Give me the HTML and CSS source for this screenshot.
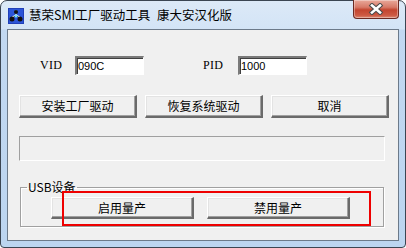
FILE: index.html
```html
<!DOCTYPE html>
<html lang="zh-CN">
<head>
    <meta charset="UTF-8">
    <meta name="viewport" content="width=device-width, initial-scale=1.0">
    <title>慧荣SMI工厂驱动工具 康大安汉化版</title>
    <link rel="stylesheet" href="styles.css">
</head>
<body>
    <div class="window">
        <div class="titlebar">
            <svg class="app-icon" width="16" height="16" viewBox="0 0 16 16">
                <rect x="0" y="0" width="16" height="16" fill="#1f3fb8"/>
                <rect x="1" y="1" width="14" height="14" fill="#2b55d8"/>
                <path d="M8 2 L8 7 M4 9 L8 7 L12 9 M4 9 L4 13 M12 9 L12 13" stroke="#ffffff" stroke-width="1"/>
                <circle cx="8" cy="4" r="2" fill="#111"/>
                <circle cx="4" cy="11" r="2.5" fill="#111"/>
                <circle cx="12" cy="11" r="2.5" fill="#111"/>
                <circle cx="8" cy="8" r="1.5" fill="#6fe0ff"/>
            </svg>
            <span class="title">慧荣SMI工厂驱动工具 康大安汉化版</span>
            <div class="close-btn">
                <svg width="16" height="12" viewBox="0 0 16 12">
                    <path d="M4 2.5 L12 9.5 M12 2.5 L4 9.5" stroke="#4a4a4a" stroke-width="4.6" stroke-linecap="square"/>
                    <path d="M4 2.5 L12 9.5 M12 2.5 L4 9.5" stroke="#ffffff" stroke-width="2.6" stroke-linecap="square"/>
                </svg>
            </div>
        </div>

        <div class="client">
            <div class="id-row">
                <label class="id-label" for="vid">VID</label>
                <input class="id-input" id="vid" type="text" value="090C">
                <label class="id-label pid-label" for="pid">PID</label>
                <input class="id-input" id="pid" type="text" value="1000">
            </div>

            <div class="action-row">
                <button class="btn btn-wide">安装工厂驱动</button>
                <button class="btn btn-wide">恢复系统驱动</button>
                <button class="btn btn-wide btn-last">取消</button>
            </div>

            <div class="status-box"></div>

            <fieldset class="usb-group">
                <legend>USB设备</legend>
                <div class="usb-row">
                    <button class="btn btn-usb">启用量产</button>
                    <button class="btn btn-usb">禁用量产</button>
                </div>
            </fieldset>
        </div>

        <div class="marker"></div>
    </div>
</body>
</html>
```

FILE: styles.css
```css
body {
    margin: 0;
    background: #ffffff;
    font-family: "Noto Sans CJK SC", "DejaVu Sans", sans-serif;
    font-size: 12px;
    color: #000;
}
.window {
    position: relative;
    width: 406px;
    height: 248px;
    box-sizing: border-box;
    border: 1px solid #3b4552;
    border-radius: 7px 7px 4px 4px;
    background: linear-gradient(180deg, #dce9f7 0px, #d3e4f6 28px, #c2d8f1 29px, #bcd5f0 100%);
    padding: 0 6px 6px;
    display: flex;
    flex-direction: column;
}
.titlebar {
    height: 28px;
    display: flex;
    align-items: flex-start;
}
.app-icon {
    margin: 7px 0 0 1px;
    flex: none;
}
.title {
    margin: 6px 0 0 5px;
    font-size: 12.5px;
    line-height: 16px;
    word-spacing: 4px;
    color: #000;
}
.close-btn {
    margin-left: auto;
    margin-top: -1px;
    width: 44px;
    height: 18px;
    border: 1px solid #6b2a22;
    border-top: none;
    border-radius: 0 0 4px 4px;
    background: linear-gradient(180deg, #e9a99a 0%, #d77a68 40%, #c3452f 55%, #cd5a43 85%, #db8a74 100%);
    box-shadow: inset 0 0 0 1px rgba(255, 255, 255, 0.35);
    display: flex;
    align-items: center;
    justify-content: center;
}
.client {
    flex: 1;
    border: 1px solid #6c7a8a;
    background: #f0f0f0;
    padding: 0 11px;
    display: flex;
    flex-direction: column;
    align-items: flex-start;
}
.id-row {
    margin-top: 26px;
    padding-left: 21px;
    height: 19px;
    display: flex;
    align-items: center;
}
.id-label {
    width: 35px;
    font-family: "Liberation Serif", serif;
    font-size: 12px;
    letter-spacing: 0.3px;
}
.pid-label {
    margin-left: 59px;
}
.id-input {
    width: 69px;
    height: 19px;
    box-sizing: border-box;
    margin: 0;
    padding: 0 0 0 1px;
    border-style: solid;
    border-width: 2px 1px 1px 2px;
    border-color: #7a7a7a #ffffff #ffffff #7a7a7a;
    box-shadow: inset 1px 1px 0 #404040;
    background: #fff;
    font-family: "Liberation Sans", sans-serif;
    font-size: 11px;
    color: #000;
    outline: none;
}
.action-row {
    margin-top: 20px;
    display: flex;
}
.btn {
    box-sizing: border-box;
    margin: 0;
    padding: 0;
    background: #f0f0f0;
    border-style: solid;
    border-width: 1px 2px 2px 1px;
    border-color: #ffffff #6a6a6a #6a6a6a #ffffff;
    box-shadow: inset -1px -1px 0 #a0a0a0, inset 1px 1px 0 #e3e3e3;
    font-family: "Noto Sans CJK SC", sans-serif;
    font-size: 12px;
    line-height: 14px;
    color: #000;
}
.btn-wide {
    width: 118px;
    height: 23px;
    margin-right: 8px;
}
.btn-last {
    margin-right: 0;
}
.status-box {
    margin-top: 18px;
    width: 366px;
    height: 25px;
    box-sizing: border-box;
    border-style: solid;
    border-width: 1px;
    border-color: #a0a0a0 #ffffff #ffffff #a0a0a0;
}
.usb-group {
    margin: 20px 0 0 1px;
    width: 364px;
    box-sizing: border-box;
    padding: 4px 0 7px 0;
    border: 1px solid #a0a0a0;
    box-shadow: inset 1px 1px 0 #ffffff, 1px 1px 0 #ffffff;
    min-inline-size: 0;
}
.usb-group legend {
    margin-left: 6px;
    padding: 0 1px;
    font-size: 12px;
    line-height: 12px;
}
.usb-row {
    padding-left: 30px;
    display: flex;
    gap: 13px;
}
.btn-usb {
    width: 143px;
    height: 22px;
}
.marker {
    position: absolute;
    left: 61px;
    top: 190px;
    width: 309px;
    height: 35px;
    box-sizing: border-box;
    border: 2px solid #ee0000;
}
```
